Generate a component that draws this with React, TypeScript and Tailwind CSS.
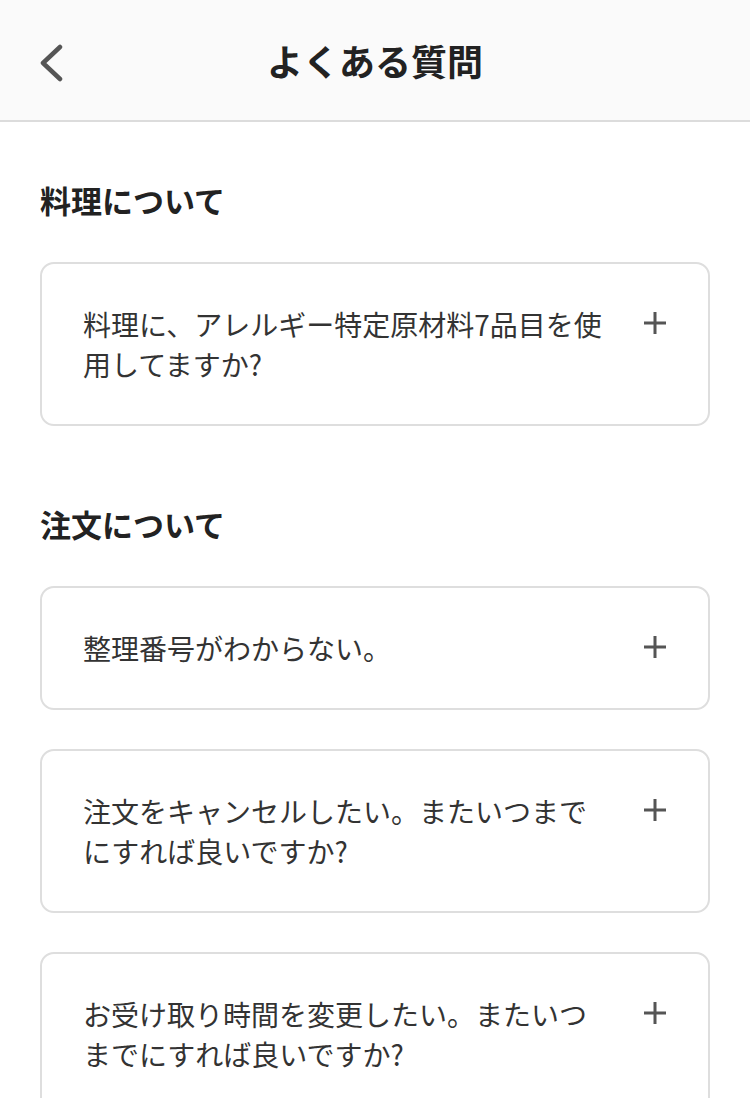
import { useState } from 'react';

type Faq = { q: string; a: string };

const sections: { title: string; items: Faq[] }[] = [
  {
    title: '料理について',
    items: [{ q: '料理に、アレルギー特定原材料7品目を使用してますか?', a: '' }],
  },
  {
    title: '注文について',
    items: [
      { q: '整理番号がわからない。', a: '' },
      { q: '注文をキャンセルしたい。またいつまでにすれば良いですか?', a: '' },
      { q: 'お受け取り時間を変更したい。またいつまでにすれば良いですか?', a: '' },
    ],
  },
];

function PlusIcon() {
  return (
    <svg width="24" height="24" viewBox="0 0 24 24" className="shrink-0 mt-[7px]">
      <path d="M12 1v22M1 12h22" stroke="#555" strokeWidth="3" fill="none" />
    </svg>
  );
}

function FaqCard({ item }: { item: Faq }) {
  const [open, setOpen] = useState(false);
  return (
    <div className="border-2 border-[#dedede] rounded-[14px] bg-white">
      <button
        onClick={() => setOpen(!open)}
        className="w-full flex items-start gap-[33px] px-[41px] py-10 text-left"
      >
        <span className="flex-1 text-[28px] leading-[40px] text-[#333]">{item.q}</span>
        <PlusIcon />
      </button>
    </div>
  );
}

export default function App() {
  return (
    <div
      className="min-h-screen bg-white"
      style={{ fontFamily: '"Noto Sans CJK JP", "Noto Sans", sans-serif' }}
    >
      {/* Header */}
      <header className="h-[122px] bg-[#fafafa] border-b-2 border-[#dcdcdc] flex items-center relative">
        <button className="absolute left-[38px] top-[44px] p-0">
          <svg width="26" height="38" viewBox="0 0 26 38">
            <path d="M22 3L5 19l17 16" stroke="#555" strokeWidth="4.5" fill="none" strokeLinecap="round" strokeLinejoin="round" />
          </svg>
        </button>
        <h1 className="w-full text-center text-[36px] font-bold text-[#222]">よくある質問</h1>
      </header>

      <main className="px-10 pt-[58px] flex flex-col gap-[78px]">
        {sections.map(s => (
          <section key={s.title}>
            <h2 className="text-[31px] leading-[40px] font-bold text-[#222] mb-[42px]">{s.title}</h2>
            <div className="flex flex-col gap-[39px]">
              {s.items.map(item => (
                <FaqCard key={item.q} item={item} />
              ))}
            </div>
          </section>
        ))}
      </main>
    </div>
  );
}
